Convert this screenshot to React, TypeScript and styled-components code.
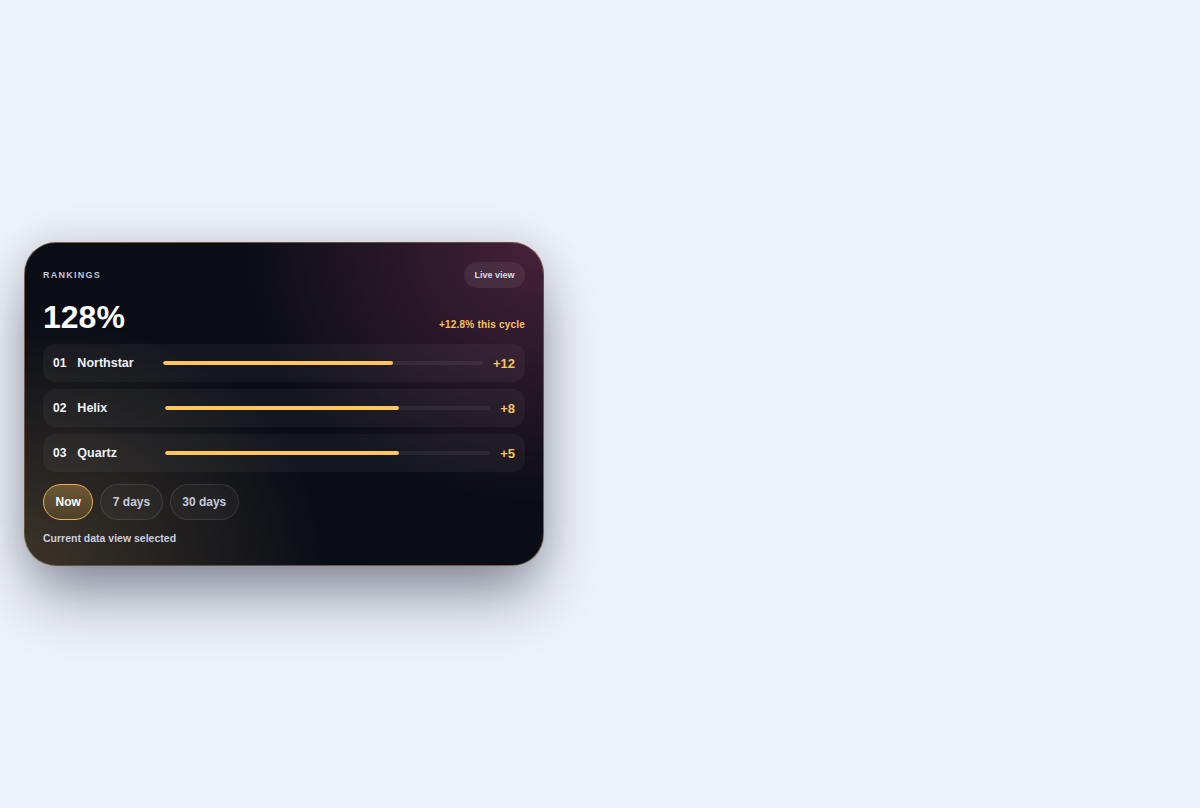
import React, { useState } from "react";
import styled, { createGlobalStyle } from "styled-components";

const Global = createGlobalStyle`
  * { box-sizing: border-box; }
  html, body { margin: 0; padding: 0; background: #edf1f8; }
  body { font-family: "Liberation Sans", Arial, sans-serif; }
`;

const Page = styled.div`
  min-height: 808px;
  padding: 242px 0 0 24px;
`;

const Card = styled.section`
  width: 520px;
  height: 324px;
  border-radius: 32px;
  border: 1px solid rgba(205, 165, 110, 0.45);
  padding: 19px 18px 20px;
  display: flex;
  flex-direction: column;
  gap: 12px;
  color: #fff;
  background:
    radial-gradient(ellipse 300px 250px at 0% 100%, rgba(74, 63, 46, 0.78), rgba(74, 63, 46, 0) 100%),
    radial-gradient(ellipse 300px 260px at 100% 0%, rgba(80, 36, 62, 0.88), rgba(80, 36, 62, 0) 100%),
    #0a0d16;
  box-shadow: 0 36px 60px -8px rgba(22, 28, 48, 0.45), 0 0 40px rgba(22, 28, 48, 0.14);
`;

const Header = styled.header`
  display: flex;
  justify-content: space-between;
  align-items: center;
  height: 26px;
`;

const Eyebrow = styled.span`
  font-size: 9px;
  font-weight: 700;
  letter-spacing: 0.14em;
  color: #c0c6d7;
  text-transform: uppercase;
`;

const Pill = styled.span`
  height: 26px;
  padding: 0 10.5px;
  display: inline-flex;
  align-items: center;
  border-radius: 13px;
  background: rgba(255, 255, 255, 0.07);
  font-size: 9px;
  font-weight: 700;
  color: #d9dceb;
`;

const Summary = styled.div`
  display: flex;
  justify-content: space-between;
  align-items: flex-end;
  height: 32px;
`;

const BigValue = styled.span`
  font-size: 32px;
  line-height: 30px;
  padding-top: 2px;
  font-weight: 700;
  color: #ffffff;
`;

const Delta = styled.span`
  font-size: 10px;
  line-height: 14px;
  font-weight: 700;
  letter-spacing: 0.2px;
  color: #f7c35e;
`;

const List = styled.div`
  display: flex;
  flex-direction: column;
  gap: 7px;
`;

const Row = styled.div`
  height: 38px;
  border-radius: 12px;
  background: rgba(255, 255, 255, 0.045);
  display: grid;
  grid-template-columns: auto 1fr 4.2fr auto;
  align-items: center;
  column-gap: 10px;
  padding: 0 10px;
`;

const Rank = styled.span`
  font-size: 12px;
  font-weight: 700;
  color: #f4f5f8;
  margin-right: 1px;
`;

const Name = styled.span`
  font-size: 12.5px;
  font-weight: 700;
  color: #eef0f6;
`;

const Track = styled.div`
  height: 4px;
  border-radius: 2px;
  background: rgba(255, 255, 255, 0.06);
  overflow: hidden;
`;

const Fill = styled.div`
  height: 100%;
  border-radius: 2px;
  background: #ffc65f;
`;

const Value = styled.span`
  font-size: 13px;
  font-weight: 700;
  color: #f7c35e;
  text-align: right;
`;

const Tabs = styled.div`
  display: flex;
  gap: 7px;
`;

const Tab = styled.button<{ $active?: boolean }>`
  height: 36px;
  padding: 0 11.5px;
  border-radius: 18px;
  font-family: inherit;
  font-size: 12px;
  font-weight: 700;
  cursor: pointer;
  color: ${(p) => (p.$active ? "#ffffff" : "#c7cbdc")};
  border: 1px solid ${(p) => (p.$active ? "#e9b44d" : "rgba(255,255,255,0.1)")};
  background: ${(p) =>
    p.$active
      ? "linear-gradient(180deg, rgba(112, 90, 54, 0.95), rgba(80, 65, 42, 0.95))"
      : "rgba(255,255,255,0.035)"};
`;

const Caption = styled.p`
  margin: 0;
  font-size: 10.5px;
  font-weight: 700;
  color: #c9cee0;
`;

const rows = [
  { rank: "01", name: "Northstar", value: "+12", pct: 72 },
  { rank: "02", name: "Helix", value: "+8", pct: 72 },
  { rank: "03", name: "Quartz", value: "+5", pct: 72 },
];

export default function App() {
  const [tab, setTab] = useState("Now");
  return (
    <>
      <Global />
      <Page>
        <Card>
          <Header>
            <Eyebrow>Rankings</Eyebrow>
            <Pill>Live view</Pill>
          </Header>
          <Summary>
            <BigValue>128%</BigValue>
            <Delta>+12.8% this cycle</Delta>
          </Summary>
          <List>
            {rows.map((r) => (
              <Row key={r.rank}>
                <Rank>{r.rank}</Rank>
                <Name>{r.name}</Name>
                <Track>
                  <Fill style={{ width: `${r.pct}%` }} />
                </Track>
                <Value>{r.value}</Value>
              </Row>
            ))}
          </List>
          <Tabs>
            {["Now", "7 days", "30 days"].map((t) => (
              <Tab key={t} $active={tab === t} onClick={() => setTab(t)}>
                {t}
              </Tab>
            ))}
          </Tabs>
          <Caption>Current data view selected</Caption>
        </Card>
      </Page>
    </>
  );
}
